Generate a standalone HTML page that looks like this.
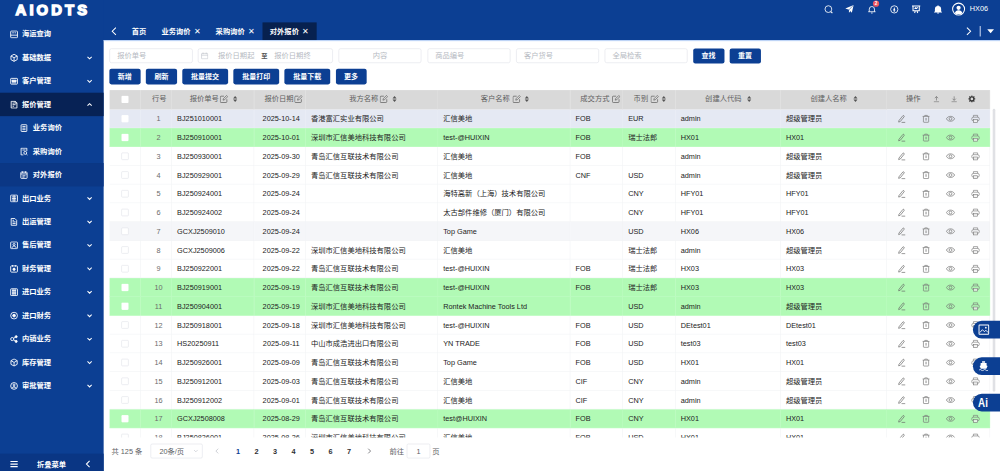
<!DOCTYPE html>
<html lang="zh-CN"><head><meta charset="utf-8"><title>AIODTS - 对外报价</title>
<style>
*{box-sizing:border-box;margin:0;padding:0}
html,body{width:1000px;height:471px;overflow:hidden;background:#fff}
body{font-family:"Liberation Sans","Noto Sans CJK SC",sans-serif;color:#333}
#root{position:absolute;left:0;top:0;width:1920px;height:905px;transform:scale(.5208333);transform-origin:0 0;font-size:14px;overflow:hidden;background:#fff}
svg{display:block}
.abs{position:absolute}
#hdr{position:absolute;left:0;top:0;width:1920px;height:77px;background:#0c3f93}
#side{position:absolute;left:0;top:0;width:199px;height:905px;background:#0c3f93}
#logo{position:absolute;left:30px;top:-.5px;font-size:28.5px;line-height:38px;font-weight:700;color:#fff;letter-spacing:5.9px;-webkit-text-stroke:2.6px #fff;font-family:"Liberation Sans",sans-serif}
#menu{position:absolute;left:0;top:43px;width:199px}
.m{position:relative;height:45px;line-height:45px;color:#fff;font-size:14px;font-weight:700;white-space:nowrap}
.m .mi{position:absolute;left:19px;top:14.5px}
.m .mt{position:absolute;left:42px;top:0}
.m .ar{position:absolute;left:166px;top:16.5px}
.m.sub.cur{background:#0b3785}
.m.sub .mi{left:38px}
.m.sub .mt{left:63px}
.m.act{background:#072255}
#fold{position:absolute;left:0;top:871px;width:199px;height:40px;background:#0a3684;color:#fff;font-weight:700;line-height:40px}
.hi2{position:absolute}
.tab{position:absolute;top:42.5px;height:34.5px;line-height:34px;color:#fff;font-weight:700;font-size:14px;white-space:nowrap;padding-left:14px}
.tab.on{background:#07214f}
.tab .x{position:absolute;top:0;font-weight:400;font-size:15px}
.inp{position:absolute;top:93px;height:28px;border:1px solid #dcdfe6;border-radius:4px;background:#fff;color:#b6bac2;font-size:14px;line-height:26px;padding-left:14px;white-space:nowrap}
.btn{position:absolute;height:29.5px;border-radius:4px;background:#0c3f93;color:#fff;font-size:13.5px;font-weight:700;text-align:center;line-height:29px;white-space:nowrap}
#tw{position:absolute;left:209.5px;top:173px;width:1692px;height:667px;overflow:hidden}
table{border-collapse:separate;border-spacing:0;table-layout:fixed;width:1691px}
th{height:36.5px;background:#d9d9d9;color:#606060;font-weight:400;font-size:14px;border-right:1px solid #e2e2e2;white-space:nowrap;position:relative;padding:0;text-align:center;line-height:36.5px}
th .ht{position:absolute;top:-2.5px}
th .hx{position:absolute;top:8.5px}
th.opsh .oi{position:absolute;top:9.5px}
td{height:36px;border-bottom:1px solid #f0f1f4;border-right:1px solid #f0f1f4;padding:1px 0 0 10.5px;font-size:14px;color:#222;white-space:nowrap;overflow:hidden;line-height:34px}
td.c{text-align:center;padding:1px 0 0 0}
td.n{color:#6b6b6b;padding-left:11px}
tr.g td{background:#b1fab5;border-color:#bcfbc0}
tr.cur td{background:#e5e9f3;border-color:#eaedf5}
tr.hov td{background:#f5f6f9}
.cb{display:inline-block;width:14px;height:14px;border:1px solid #dcdfe6;border-radius:2px;background:#fff;vertical-align:middle;margin-top:-2px;margin-left:2px}
.hcb{border-color:rgba(255,255,255,.45)}
tr.g .cb,tr.cur .cb{border-color:rgba(255,255,255,.45)}
td.ops{position:relative;padding:0}
.op{position:absolute;top:9.2px}
#pg{position:absolute;left:0;top:852px;height:28px;line-height:28px;font-size:14px;color:#606266}
#pg span{position:absolute;top:0;white-space:nowrap}
#pg .pn{font-weight:700;color:#303133;width:30px;text-align:center}
.fl{position:absolute;left:1868px;width:60px;height:33.5px;border-radius:17px 0 0 17px;background:#0c3f93}
</style></head><body>
<div id="root">
<div id="hdr">
<span class="hi2" style="left:1581.5px;top:8.5px"><svg width="18" height="18" viewBox="0 0 18 18" fill="none" stroke="#fff" stroke-width="1.6"><circle cx="8.5" cy="8.5" r="6.5"/><path d="M13.2 13.2l3 3" stroke-width="2"/></svg></span><span class="hi2" style="left:1622px;top:7.5px"><svg width="20" height="20" viewBox="0 0 20 20" fill="none" stroke="#fff" stroke-width="1.6"><path d="M1 8.5L17 1.5l-3.5 15-5-6z" fill="#fff" stroke="none"/><path d="M8 10v6.5l3-3.5z" fill="#fff" stroke="none"/><path d="M8.3 10.7L16.5 2" stroke="#0c3f93" stroke-width="1"/></svg></span><span class="hi2" style="left:1665px;top:8.5px"><svg width="18" height="18" viewBox="0 0 18 18" fill="none" stroke="#fff" stroke-width="1.6"><path d="M4 13.5V8.5a5 5 0 0 1 10 0v5M2 13.5h14M7.5 16h3"/></svg></span><span class="hi2" style="left:1707.5px;top:8.5px"><svg width="18" height="18" viewBox="0 0 18 18" fill="none" stroke="#fff" stroke-width="1.6"><circle cx="9" cy="9" r="7"/><path d="M9 4.5l2.2 6.5H6.8z" fill="#fff" stroke="none"/><path d="M9 9v5" /></svg></span><span class="hi2" style="left:1749.7px;top:8.5px"><svg width="18" height="18" viewBox="0 0 18 18" fill="none" stroke="#fff" stroke-width="1.6"><path d="M1 2.5h16M3 2.5v9h12v-9M6 16l1.5-4.5M12 16l-1.5-4.5M6 8l2-2 2 1.5 2-2.5" stroke-width="2"/></svg></span><span class="hi2" style="left:1792px;top:8.5px"><svg width="18" height="18" viewBox="0 0 18 18" fill="none" stroke="#fff" stroke-width="1.6"><path d="M3 12.5V8.5a6 6 0 0 1 12 0v4l2 2.5H1z" fill="#fff" stroke="none"/><circle cx="9" cy="16" r="1.5" fill="#fff" stroke="none"/><circle cx="9" cy="2.5" r="1.2" fill="#fff" stroke="none"/></svg></span>
<span class="abs" style="left:1676px;top:1px;width:12px;height:12px;border-radius:6px;background:#ee5560;color:#fff;font-size:9px;line-height:12px;text-align:center;font-weight:700">2</span>
<span class="abs" style="left:1828px;top:5px;width:25px;height:25px;border-radius:50%;border:2px solid #fff;overflow:hidden"><svg width="21" height="21" viewBox="0 0 22 22"><circle cx="11" cy="8.5" r="4.2" fill="#fff"/><path d="M3.5 21c0-5 3-7.5 7.5-7.5s7.5 2.5 7.5 7.5z" fill="#fff"/></svg></span>
<span class="abs" style="left:1862px;top:9px;color:#fff;font-size:14px;line-height:17px">HX06</span>
<svg class="abs" style="left:212px;top:50px" width="14" height="20" viewBox="0 0 14 20"><path d="M10.5 3L3.5 10l7 7" fill="none" stroke="#fff" stroke-width="2"/></svg>
<div class="tab" style="left:239px;width:57px">首页</div>
<div class="tab" style="left:296px;width:104px">业务询价<span class="x" style="left:76px">✕</span></div>
<div class="tab" style="left:400px;width:104px">采购询价<span class="x" style="left:76px">✕</span></div>
<div class="tab on" style="left:504px;width:104px">对外报价<span class="x" style="left:76px">✕</span></div>
<svg class="abs" style="left:1853px;top:50px" width="14" height="20" viewBox="0 0 14 20"><path d="M3.5 3l7 7-7 7" fill="none" stroke="#fff" stroke-width="2"/></svg>
<span class="abs" style="left:1881px;top:50px;width:1.5px;height:20px;background:#c9d6f0"></span>
<svg class="abs" style="left:1894px;top:55px" width="16" height="10" viewBox="0 0 16 10"><path d="M1.5 1h13L8 9z" fill="#fff"/></svg>
</div>
<div id="side">
<div id="logo">AIODTS</div>
<div id="menu">
<div class="m"><svg width="16" height="16" viewBox="0 0 16 16" class="mi" fill="none" stroke="#fff" stroke-width="1.7"><rect x="1.5" y="1.5" width="13" height="13" rx="1.5"/><path d="M1.5 9.5h13M4.5 5h3M9 5h2.5"/></svg><span class="mt">海运查询</span></div>
<div class="m"><svg width="16" height="16" viewBox="0 0 16 16" class="mi" fill="none" stroke="#fff" stroke-width="1.7"><path d="M8 1.2l6 3.3v7L8 14.8l-6-3.3v-7z"/><path d="M2 4.5l6 3.3 6-3.3M8 7.8v7"/></svg><span class="mt">基础数据</span><svg class="ar" width="12" height="12" viewBox="0 0 12 12"><path d="M2 4l4 4 4-4" fill="none" stroke="#fff" stroke-width="2"/></svg></div>
<div class="m"><svg width="16" height="16" viewBox="0 0 16 16" class="mi" fill="none" stroke="#fff" stroke-width="1.7"><rect x="1.5" y="2.5" width="13" height="11" rx="1"/><path d="M4 6h8v2.5H4z" fill="#fff"/><path d="M4 11h8"/></svg><span class="mt">客户管理</span><svg class="ar" width="12" height="12" viewBox="0 0 12 12"><path d="M2 4l4 4 4-4" fill="none" stroke="#fff" stroke-width="2"/></svg></div>
<div class="m act"><svg width="16" height="16" viewBox="0 0 16 16" class="mi" fill="none" stroke="#fff" stroke-width="1.7"><path d="M2.5 1.5h8l3 3v10h-11z"/><path d="M5 5h4M5 8h6M5 11h3" /><path d="M10 1.5v3.5h3.5" /></svg><span class="mt">报价管理</span><svg class="ar" width="12" height="12" viewBox="0 0 12 12"><path d="M2 8l4-4 4 4" fill="none" stroke="#fff" stroke-width="2"/></svg></div>
<div class="m sub"><svg width="16" height="16" viewBox="0 0 16 16" class="mi" fill="none" stroke="#fff" stroke-width="1.7"><rect x="2.5" y="1.5" width="11" height="13" rx="1"/><path d="M5 5h6M5 8h6M5 11h6"/></svg><span class="mt">业务询价</span></div>
<div class="m sub"><svg width="16" height="16" viewBox="0 0 16 16" class="mi" fill="none" stroke="#fff" stroke-width="1.7"><path d="M13.5 7V1.5h-11v13H7"/><circle cx="10.5" cy="10.5" r="2.8"/><path d="M12.6 12.6l2.2 2.2M5 5h6"/></svg><span class="mt">采购询价</span></div>
<div class="m sub cur"><svg width="16" height="16" viewBox="0 0 16 16" class="mi" fill="none" stroke="#fff" stroke-width="1.7"><rect x="2" y="2.5" width="12" height="12" rx="1"/><path d="M2 6h12M5 1v3M11 1v3M5 9.5h6M5 12h4"/></svg><span class="mt">对外报价</span></div>
<div class="m"><svg width="16" height="16" viewBox="0 0 16 16" class="mi" fill="none" stroke="#fff" stroke-width="1.7"><rect x="1.5" y="1.5" width="13" height="13" rx="1"/><path d="M4 5h8M4 8h8M4 11h8M8 1.5v13"/></svg><span class="mt">出口业务</span><svg class="ar" width="12" height="12" viewBox="0 0 12 12"><path d="M2 4l4 4 4-4" fill="none" stroke="#fff" stroke-width="2"/></svg></div>
<div class="m"><svg width="16" height="16" viewBox="0 0 16 16" class="mi" fill="none" stroke="#fff" stroke-width="1.7"><path d="M2.5 14.5v-13h7l3.5 3.5v9.5z"/><path d="M5 8h6M5 11h6M5 5h3"/></svg><span class="mt">出运管理</span><svg class="ar" width="12" height="12" viewBox="0 0 12 12"><path d="M2 4l4 4 4-4" fill="none" stroke="#fff" stroke-width="2"/></svg></div>
<div class="m"><svg width="16" height="16" viewBox="0 0 16 16" class="mi" fill="none" stroke="#fff" stroke-width="1.7"><rect x="1.5" y="1.5" width="13" height="13" rx="1.5"/><circle cx="8" cy="6.5" r="2"/><path d="M4 13c.5-2.5 2-3.5 4-3.5s3.5 1 4 3.5"/></svg><span class="mt">售后管理</span><svg class="ar" width="12" height="12" viewBox="0 0 12 12"><path d="M2 4l4 4 4-4" fill="none" stroke="#fff" stroke-width="2"/></svg></div>
<div class="m"><svg width="16" height="16" viewBox="0 0 16 16" class="mi" fill="none" stroke="#fff" stroke-width="1.7"><rect x="1.5" y="2.5" width="13" height="12" rx="1.5"/><path d="M5 1v3M11 1v3"/><circle cx="8" cy="9" r="2.2" fill="#fff"/></svg><span class="mt">财务管理</span><svg class="ar" width="12" height="12" viewBox="0 0 12 12"><path d="M2 4l4 4 4-4" fill="none" stroke="#fff" stroke-width="2"/></svg></div>
<div class="m"><svg width="16" height="16" viewBox="0 0 16 16" class="mi" fill="none" stroke="#fff" stroke-width="1.7"><rect x="1.5" y="1.5" width="13" height="13" rx="1"/><path d="M4 5h8M4 8h8M4 11h8M6 1.5v13M10 1.5v13"/></svg><span class="mt">进口业务</span><svg class="ar" width="12" height="12" viewBox="0 0 12 12"><path d="M2 4l4 4 4-4" fill="none" stroke="#fff" stroke-width="2"/></svg></div>
<div class="m"><svg width="16" height="16" viewBox="0 0 16 16" class="mi" fill="none" stroke="#fff" stroke-width="1.7"><circle cx="8" cy="8" r="6.5"/><circle cx="8" cy="8" r="2.6" fill="#fff"/></svg><span class="mt">进口财务</span><svg class="ar" width="12" height="12" viewBox="0 0 12 12"><path d="M2 4l4 4 4-4" fill="none" stroke="#fff" stroke-width="2"/></svg></div>
<div class="m"><svg width="16" height="16" viewBox="0 0 16 16" class="mi" fill="none" stroke="#fff" stroke-width="1.7"><circle cx="4.5" cy="8" r="3"/><circle cx="12" cy="3.5" r="2" fill="#fff"/><circle cx="12" cy="12.5" r="2" fill="#fff"/><path d="M7 6.5l3.5-2M7 9.5l3.5 2"/></svg><span class="mt">内销业务</span><svg class="ar" width="12" height="12" viewBox="0 0 12 12"><path d="M2 4l4 4 4-4" fill="none" stroke="#fff" stroke-width="2"/></svg></div>
<div class="m"><svg width="16" height="16" viewBox="0 0 16 16" class="mi" fill="none" stroke="#fff" stroke-width="1.7"><path d="M8 1.2l6 3.3v7L8 14.8l-6-3.3v-7z"/><path d="M2 4.5l6 3.3 6-3.3M8 7.8v7"/></svg><span class="mt">库存管理</span><svg class="ar" width="12" height="12" viewBox="0 0 12 12"><path d="M2 4l4 4 4-4" fill="none" stroke="#fff" stroke-width="2"/></svg></div>
<div class="m"><svg width="16" height="16" viewBox="0 0 16 16" class="mi" fill="none" stroke="#fff" stroke-width="1.7"><circle cx="8" cy="8" r="6.5"/><circle cx="8" cy="6" r="1.8"/><path d="M4.5 12.5c.5-2.3 1.8-3.2 3.5-3.2s3 .900 3.5 3.2M8 9.3v3"/></svg><span class="mt">审批管理</span><svg class="ar" width="12" height="12" viewBox="0 0 12 12"><path d="M2 4l4 4 4-4" fill="none" stroke="#fff" stroke-width="2"/></svg></div>
</div>
<div id="fold"><svg class="abs" style="left:19px;top:12px" width="16" height="16" viewBox="0 0 16 16"><path d="M1 3h14M1 8h14M1 13h14" stroke="#fff" stroke-width="2.2"/></svg><span class="abs" style="left:71px;top:0">折叠菜单</span><svg class="abs" style="left:163px;top:11px" width="12" height="18" viewBox="0 0 12 18"><path d="M9 3L3 9l6 6" fill="none" stroke="#fff" stroke-width="2"/></svg></div>
</div>
<div class="abs" style="left:199px;top:77px;width:1721px;height:2px;background:#b9d2f6"></div>

<div class="inp" style="left:210px;width:160px">报价单号</div>
<div class="inp" style="left:379.5px;width:259px;padding-left:0"><svg class="abs" style="left:5px;top:6px" width="14" height="14" viewBox="0 0 14 14"><rect x="1" y="2.5" width="12" height="10.5" rx="1" fill="none" stroke="#c0c4cc" stroke-width="1.2"/><path d="M1 6h12M4 1v3M10 1v3" stroke="#c0c4cc" stroke-width="1.2"/></svg><span class="abs" style="left:38px;top:0">报价日期起</span><span class="abs" style="left:121px;top:0;color:#555;font-weight:700;font-size:12px">至</span><span class="abs" style="left:146px;top:0">报价日期终</span></div>
<div class="inp" style="left:650px;width:159px;padding-left:0;text-align:center">内容</div>
<div class="inp" style="left:820.5px;width:159px">商品编号</div>
<div class="inp" style="left:991px;width:159px">客户货号</div>
<div class="inp" style="left:1161px;width:159px">全局检索</div>
<div class="btn" style="left:1330.5px;top:92.5px;width:60px">查找</div>
<div class="btn" style="left:1400.5px;top:92.5px;width:60px">重置</div>

<div class="btn" style="left:210px;top:132px;width:59.5px">新增</div>
<div class="btn" style="left:280px;top:132px;width:60px">刷新</div>
<div class="btn" style="left:349.5px;top:132px;width:88.5px">批量提交</div>
<div class="btn" style="left:448px;top:132px;width:88px">批量打印</div>
<div class="btn" style="left:546px;top:132px;width:88px">批量下载</div>
<div class="btn" style="left:644.5px;top:132px;width:59px">更多</div>

<div id="tw"><table><colgroup><col style="width:60px"><col style="width:60px"><col style="width:158px"><col style="width:99px"><col style="width:254px"><col style="width:254px"><col style="width:101px"><col style="width:101px"><col style="width:202px"><col style="width:204px"><col style="width:198px"></colgroup><thead><tr><th><span class="cb hcb"></span></th><th><span class="ht" style="left:22.3px">行号</span></th><th><span class="ht" style="left:34.8px">报价单号</span><span class="hx" style="left:92.9px"><svg width="16" height="16" viewBox="0 0 16 16" class="hi"><path d="M13.6 8.5v4.6a1.7 1.7 0 0 1-1.7 1.7H2.6a1.7 1.7 0 0 1-1.7-1.7V4.4a1.7 1.7 0 0 1 1.7-1.7h5.4" fill="none" stroke="#555" stroke-width="1.3"/><path d="M6.2 10.3l.8-3 6-6 2.2 2.2-6 6z" fill="#d9d9d9" stroke="#555" stroke-width="1.2" stroke-linejoin="round"/></svg></span><span class="hx" style="left:117.2px"><svg width="9" height="16" viewBox="0 0 9 16" class="hs"><path d="M4.5 2.2L8.5 7.2H.5z" fill="#555"/><path d="M4.5 13.8L.5 8.8h8z" fill="#555"/></svg></span></th><th><span class="ht" style="left:20.3px">报价日期</span><span class="hx" style="left:77.7px"><svg width="16" height="16" viewBox="0 0 16 16" class="hi"><path d="M13.6 8.5v4.6a1.7 1.7 0 0 1-1.7 1.7H2.6a1.7 1.7 0 0 1-1.7-1.7V4.4a1.7 1.7 0 0 1 1.7-1.7h5.4" fill="none" stroke="#555" stroke-width="1.3"/><path d="M6.2 10.3l.8-3 6-6 2.2 2.2-6 6z" fill="#d9d9d9" stroke="#555" stroke-width="1.2" stroke-linejoin="round"/></svg></span></th><th><span class="ht" style="left:84px">我方名称</span><span class="hx" style="left:142.5px"><svg width="16" height="16" viewBox="0 0 16 16" class="hi"><path d="M13.6 8.5v4.6a1.7 1.7 0 0 1-1.7 1.7H2.6a1.7 1.7 0 0 1-1.7-1.7V4.4a1.7 1.7 0 0 1 1.7-1.7h5.4" fill="none" stroke="#555" stroke-width="1.3"/><path d="M6.2 10.3l.8-3 6-6 2.2 2.2-6 6z" fill="#d9d9d9" stroke="#555" stroke-width="1.2" stroke-linejoin="round"/></svg></span><span class="hx" style="left:166.2px"><svg width="9" height="16" viewBox="0 0 9 16" class="hs"><path d="M4.5 2.2L8.5 7.2H.5z" fill="#555"/><path d="M4.5 13.8L.5 8.8h8z" fill="#555"/></svg></span></th><th><span class="ht" style="left:82.4px">客户名称</span><span class="hx" style="left:143.9px"><svg width="16" height="16" viewBox="0 0 16 16" class="hi"><path d="M13.6 8.5v4.6a1.7 1.7 0 0 1-1.7 1.7H2.6a1.7 1.7 0 0 1-1.7-1.7V4.4a1.7 1.7 0 0 1 1.7-1.7h5.4" fill="none" stroke="#555" stroke-width="1.3"/><path d="M6.2 10.3l.8-3 6-6 2.2 2.2-6 6z" fill="#d9d9d9" stroke="#555" stroke-width="1.2" stroke-linejoin="round"/></svg></span><span class="hx" style="left:166.1px"><svg width="9" height="16" viewBox="0 0 9 16" class="hs"><path d="M4.5 2.2L8.5 7.2H.5z" fill="#555"/><path d="M4.5 13.8L.5 8.8h8z" fill="#555"/></svg></span></th><th><span class="ht" style="left:19.7px">成交方式</span><span class="hx" style="left:80.5px"><svg width="16" height="16" viewBox="0 0 16 16" class="hi"><path d="M13.6 8.5v4.6a1.7 1.7 0 0 1-1.7 1.7H2.6a1.7 1.7 0 0 1-1.7-1.7V4.4a1.7 1.7 0 0 1 1.7-1.7h5.4" fill="none" stroke="#555" stroke-width="1.3"/><path d="M6.2 10.3l.8-3 6-6 2.2 2.2-6 6z" fill="#d9d9d9" stroke="#555" stroke-width="1.2" stroke-linejoin="round"/></svg></span></th><th><span class="ht" style="left:21px">币别</span><span class="hx" style="left:53.5px"><svg width="16" height="16" viewBox="0 0 16 16" class="hi"><path d="M13.6 8.5v4.6a1.7 1.7 0 0 1-1.7 1.7H2.6a1.7 1.7 0 0 1-1.7-1.7V4.4a1.7 1.7 0 0 1 1.7-1.7h5.4" fill="none" stroke="#555" stroke-width="1.3"/><path d="M6.2 10.3l.8-3 6-6 2.2 2.2-6 6z" fill="#d9d9d9" stroke="#555" stroke-width="1.2" stroke-linejoin="round"/></svg></span><span class="hx" style="left:74.9px"><svg width="9" height="16" viewBox="0 0 9 16" class="hs"><path d="M4.5 2.2L8.5 7.2H.5z" fill="#555"/><path d="M4.5 13.8L.5 8.8h8z" fill="#555"/></svg></span></th><th><span class="ht" style="left:57.3px">创建人代码</span><span class="hx" style="left:137.7px"><svg width="9" height="16" viewBox="0 0 9 16" class="hs"><path d="M4.5 2.2L8.5 7.2H.5z" fill="#555"/><path d="M4.5 13.8L.5 8.8h8z" fill="#555"/></svg></span></th><th><span class="ht" style="left:57.5px">创建人名称</span><span class="hx" style="left:139.2px"><svg width="9" height="16" viewBox="0 0 9 16" class="hs"><path d="M4.5 2.2L8.5 7.2H.5z" fill="#555"/><path d="M4.5 13.8L.5 8.8h8z" fill="#555"/></svg></span></th><th class="opsh"><span class="ht" style="left:37px">操作</span><span class="oi" style="left:88.6px"><svg width="14" height="14" viewBox="0 0 14 14" ><path d="M7 10V2.5M3.8 5.5L7 2.3l3.2 3.2M2 12.5h10" fill="none" stroke="#666" stroke-width="1.2"/></svg></span><span class="oi" style="left:122.9px"><svg width="14" height="14" viewBox="0 0 14 14" ><path d="M7 2v7.5M3.8 6.5L7 9.7l3.2-3.2M2 12.5h10" fill="none" stroke="#666" stroke-width="1.2"/></svg></span><span class="oi" style="left:156.7px;top:10px"><svg width="14" height="14" viewBox="0 0 14 14" ><path d="M5.8 0.2L8.2 0.2L8.2 2.2L9.5 2.7L11 1.4L12.6 3L11.3 4.5L11.8 5.8L13.8 5.8L13.8 8.2L11.8 8.2L11.3 9.5L12.6 11L11 12.6L9.5 11.3L8.2 11.8L8.2 13.8L5.8 13.8L5.8 11.8L4.5 11.3L3 12.6L1.4 11L2.7 9.5L2.2 8.2L0.2 8.2L0.2 5.8L2.2 5.8L2.7 4.5L1.4 3L3 1.4L4.5 2.7L5.8 2.2z" fill="#333"/><circle cx="7" cy="7" r="2.6" fill="#d9d9d9"/></svg></span></th></tr></thead><tbody>
<tr class="cur"><td class="c"><span class="cb"></span></td><td class="c n">1</td><td>BJ251010001</td><td class="c" style="padding-left:7px">2025-10-14</td><td>香港富汇实业有限公司</td><td>汇信美地</td><td>FOB</td><td>EUR</td><td>admin</td><td>超级管理员</td><td class="ops"><span class="op" style="left:19px"><svg width="18" height="18" viewBox="0 0 18 18" ><path d="M4 12.5L11.5 3.2a1.6 1.6 0 0 1 2.4 2L6.6 14.3 3.4 15.4z" fill="none" stroke="#666" stroke-width="1.3" stroke-linejoin="round"/><path d="M9 16h7" stroke="#666" stroke-width="1.3"/></svg></span><span class="op" style="left:66px"><svg width="18" height="18" viewBox="0 0 18 18" ><path d="M2.5 4.5h13M6.5 4.5V2.6h5v1.9M4 4.5v10.3a1 1 0 0 0 1 1h8a1 1 0 0 0 1-1V4.5" fill="none" stroke="#777" stroke-width="1.3"/><path d="M9 7.5v5" stroke="#777" stroke-width="1.6"/></svg></span><span class="op" style="left:113px;margin-top:1px"><svg width="18" height="16.2" viewBox="0 0 20 18" ><path d="M1.2 9C3.2 5.4 6.4 3.8 10 3.8s6.8 1.6 8.8 5.2C16.8 12.6 13.6 14.2 10 14.2S3.2 12.6 1.2 9z" fill="none" stroke="#6c6c6c" stroke-width="1.4"/><circle cx="10" cy="9" r="3" fill="none" stroke="#6c6c6c" stroke-width="1.4"/></svg></span><span class="op" style="left:161px"><svg width="18" height="18" viewBox="0 0 18 18" ><path d="M5 6V2.5h8V6" fill="none" stroke="#777" stroke-width="1.2"/><rect x="1.8" y="6" width="14.4" height="7" rx="3" fill="none" stroke="#777" stroke-width="1.2"/><rect x="5" y="10.5" width="8" height="5.5" fill="#fff" fill-opacity=".7" stroke="#777" stroke-width="1.2"/></svg></span></td></tr>
<tr class="g"><td class="c"><span class="cb"></span></td><td class="c n">2</td><td>BJ250910001</td><td class="c" style="padding-left:7px">2025-10-01</td><td>深圳市汇信美地科技有限公司</td><td>test-@HUIXIN</td><td>FOB</td><td>瑞士法郎</td><td>HX01</td><td>HX01</td><td class="ops"><span class="op" style="left:19px"><svg width="18" height="18" viewBox="0 0 18 18" ><path d="M4 12.5L11.5 3.2a1.6 1.6 0 0 1 2.4 2L6.6 14.3 3.4 15.4z" fill="none" stroke="#666" stroke-width="1.3" stroke-linejoin="round"/><path d="M9 16h7" stroke="#666" stroke-width="1.3"/></svg></span><span class="op" style="left:66px"><svg width="18" height="18" viewBox="0 0 18 18" ><path d="M2.5 4.5h13M6.5 4.5V2.6h5v1.9M4 4.5v10.3a1 1 0 0 0 1 1h8a1 1 0 0 0 1-1V4.5" fill="none" stroke="#777" stroke-width="1.3"/><path d="M9 7.5v5" stroke="#777" stroke-width="1.6"/></svg></span><span class="op" style="left:113px;margin-top:1px"><svg width="18" height="16.2" viewBox="0 0 20 18" ><path d="M1.2 9C3.2 5.4 6.4 3.8 10 3.8s6.8 1.6 8.8 5.2C16.8 12.6 13.6 14.2 10 14.2S3.2 12.6 1.2 9z" fill="none" stroke="#6c6c6c" stroke-width="1.4"/><circle cx="10" cy="9" r="3" fill="none" stroke="#6c6c6c" stroke-width="1.4"/></svg></span><span class="op" style="left:161px"><svg width="18" height="18" viewBox="0 0 18 18" ><path d="M5 6V2.5h8V6" fill="none" stroke="#777" stroke-width="1.2"/><rect x="1.8" y="6" width="14.4" height="7" rx="3" fill="none" stroke="#777" stroke-width="1.2"/><rect x="5" y="10.5" width="8" height="5.5" fill="#fff" fill-opacity=".7" stroke="#777" stroke-width="1.2"/></svg></span></td></tr>
<tr class=""><td class="c"><span class="cb"></span></td><td class="c n">3</td><td>BJ250930001</td><td class="c" style="padding-left:7px">2025-09-30</td><td>青岛汇信互联技术有限公司</td><td>汇信美地</td><td>FOB</td><td></td><td>admin</td><td>超级管理员</td><td class="ops"><span class="op" style="left:19px"><svg width="18" height="18" viewBox="0 0 18 18" ><path d="M4 12.5L11.5 3.2a1.6 1.6 0 0 1 2.4 2L6.6 14.3 3.4 15.4z" fill="none" stroke="#666" stroke-width="1.3" stroke-linejoin="round"/><path d="M9 16h7" stroke="#666" stroke-width="1.3"/></svg></span><span class="op" style="left:66px"><svg width="18" height="18" viewBox="0 0 18 18" ><path d="M2.5 4.5h13M6.5 4.5V2.6h5v1.9M4 4.5v10.3a1 1 0 0 0 1 1h8a1 1 0 0 0 1-1V4.5" fill="none" stroke="#777" stroke-width="1.3"/><path d="M9 7.5v5" stroke="#777" stroke-width="1.6"/></svg></span><span class="op" style="left:113px;margin-top:1px"><svg width="18" height="16.2" viewBox="0 0 20 18" ><path d="M1.2 9C3.2 5.4 6.4 3.8 10 3.8s6.8 1.6 8.8 5.2C16.8 12.6 13.6 14.2 10 14.2S3.2 12.6 1.2 9z" fill="none" stroke="#6c6c6c" stroke-width="1.4"/><circle cx="10" cy="9" r="3" fill="none" stroke="#6c6c6c" stroke-width="1.4"/></svg></span><span class="op" style="left:161px"><svg width="18" height="18" viewBox="0 0 18 18" ><path d="M5 6V2.5h8V6" fill="none" stroke="#777" stroke-width="1.2"/><rect x="1.8" y="6" width="14.4" height="7" rx="3" fill="none" stroke="#777" stroke-width="1.2"/><rect x="5" y="10.5" width="8" height="5.5" fill="#fff" fill-opacity=".7" stroke="#777" stroke-width="1.2"/></svg></span></td></tr>
<tr class=""><td class="c"><span class="cb"></span></td><td class="c n">4</td><td>BJ250929001</td><td class="c" style="padding-left:7px">2025-09-29</td><td>青岛汇信互联技术有限公司</td><td>汇信美地</td><td>CNF</td><td>USD</td><td>admin</td><td>超级管理员</td><td class="ops"><span class="op" style="left:19px"><svg width="18" height="18" viewBox="0 0 18 18" ><path d="M4 12.5L11.5 3.2a1.6 1.6 0 0 1 2.4 2L6.6 14.3 3.4 15.4z" fill="none" stroke="#666" stroke-width="1.3" stroke-linejoin="round"/><path d="M9 16h7" stroke="#666" stroke-width="1.3"/></svg></span><span class="op" style="left:66px"><svg width="18" height="18" viewBox="0 0 18 18" ><path d="M2.5 4.5h13M6.5 4.5V2.6h5v1.9M4 4.5v10.3a1 1 0 0 0 1 1h8a1 1 0 0 0 1-1V4.5" fill="none" stroke="#777" stroke-width="1.3"/><path d="M9 7.5v5" stroke="#777" stroke-width="1.6"/></svg></span><span class="op" style="left:113px;margin-top:1px"><svg width="18" height="16.2" viewBox="0 0 20 18" ><path d="M1.2 9C3.2 5.4 6.4 3.8 10 3.8s6.8 1.6 8.8 5.2C16.8 12.6 13.6 14.2 10 14.2S3.2 12.6 1.2 9z" fill="none" stroke="#6c6c6c" stroke-width="1.4"/><circle cx="10" cy="9" r="3" fill="none" stroke="#6c6c6c" stroke-width="1.4"/></svg></span><span class="op" style="left:161px"><svg width="18" height="18" viewBox="0 0 18 18" ><path d="M5 6V2.5h8V6" fill="none" stroke="#777" stroke-width="1.2"/><rect x="1.8" y="6" width="14.4" height="7" rx="3" fill="none" stroke="#777" stroke-width="1.2"/><rect x="5" y="10.5" width="8" height="5.5" fill="#fff" fill-opacity=".7" stroke="#777" stroke-width="1.2"/></svg></span></td></tr>
<tr class=""><td class="c"><span class="cb"></span></td><td class="c n">5</td><td>BJ250924001</td><td class="c" style="padding-left:7px">2025-09-24</td><td></td><td>海特高新（上海）技术有限公司</td><td></td><td>CNY</td><td>HFY01</td><td>HFY01</td><td class="ops"><span class="op" style="left:19px"><svg width="18" height="18" viewBox="0 0 18 18" ><path d="M4 12.5L11.5 3.2a1.6 1.6 0 0 1 2.4 2L6.6 14.3 3.4 15.4z" fill="none" stroke="#666" stroke-width="1.3" stroke-linejoin="round"/><path d="M9 16h7" stroke="#666" stroke-width="1.3"/></svg></span><span class="op" style="left:66px"><svg width="18" height="18" viewBox="0 0 18 18" ><path d="M2.5 4.5h13M6.5 4.5V2.6h5v1.9M4 4.5v10.3a1 1 0 0 0 1 1h8a1 1 0 0 0 1-1V4.5" fill="none" stroke="#777" stroke-width="1.3"/><path d="M9 7.5v5" stroke="#777" stroke-width="1.6"/></svg></span><span class="op" style="left:113px;margin-top:1px"><svg width="18" height="16.2" viewBox="0 0 20 18" ><path d="M1.2 9C3.2 5.4 6.4 3.8 10 3.8s6.8 1.6 8.8 5.2C16.8 12.6 13.6 14.2 10 14.2S3.2 12.6 1.2 9z" fill="none" stroke="#6c6c6c" stroke-width="1.4"/><circle cx="10" cy="9" r="3" fill="none" stroke="#6c6c6c" stroke-width="1.4"/></svg></span><span class="op" style="left:161px"><svg width="18" height="18" viewBox="0 0 18 18" ><path d="M5 6V2.5h8V6" fill="none" stroke="#777" stroke-width="1.2"/><rect x="1.8" y="6" width="14.4" height="7" rx="3" fill="none" stroke="#777" stroke-width="1.2"/><rect x="5" y="10.5" width="8" height="5.5" fill="#fff" fill-opacity=".7" stroke="#777" stroke-width="1.2"/></svg></span></td></tr>
<tr class=""><td class="c"><span class="cb"></span></td><td class="c n">6</td><td>BJ250924002</td><td class="c" style="padding-left:7px">2025-09-24</td><td></td><td>太古部件维修（厦门）有限公司</td><td></td><td>CNY</td><td>HFY01</td><td>HFY01</td><td class="ops"><span class="op" style="left:19px"><svg width="18" height="18" viewBox="0 0 18 18" ><path d="M4 12.5L11.5 3.2a1.6 1.6 0 0 1 2.4 2L6.6 14.3 3.4 15.4z" fill="none" stroke="#666" stroke-width="1.3" stroke-linejoin="round"/><path d="M9 16h7" stroke="#666" stroke-width="1.3"/></svg></span><span class="op" style="left:66px"><svg width="18" height="18" viewBox="0 0 18 18" ><path d="M2.5 4.5h13M6.5 4.5V2.6h5v1.9M4 4.5v10.3a1 1 0 0 0 1 1h8a1 1 0 0 0 1-1V4.5" fill="none" stroke="#777" stroke-width="1.3"/><path d="M9 7.5v5" stroke="#777" stroke-width="1.6"/></svg></span><span class="op" style="left:113px;margin-top:1px"><svg width="18" height="16.2" viewBox="0 0 20 18" ><path d="M1.2 9C3.2 5.4 6.4 3.8 10 3.8s6.8 1.6 8.8 5.2C16.8 12.6 13.6 14.2 10 14.2S3.2 12.6 1.2 9z" fill="none" stroke="#6c6c6c" stroke-width="1.4"/><circle cx="10" cy="9" r="3" fill="none" stroke="#6c6c6c" stroke-width="1.4"/></svg></span><span class="op" style="left:161px"><svg width="18" height="18" viewBox="0 0 18 18" ><path d="M5 6V2.5h8V6" fill="none" stroke="#777" stroke-width="1.2"/><rect x="1.8" y="6" width="14.4" height="7" rx="3" fill="none" stroke="#777" stroke-width="1.2"/><rect x="5" y="10.5" width="8" height="5.5" fill="#fff" fill-opacity=".7" stroke="#777" stroke-width="1.2"/></svg></span></td></tr>
<tr class="hov"><td class="c"><span class="cb"></span></td><td class="c n">7</td><td>GCXJ2509010</td><td class="c" style="padding-left:7px">2025-09-24</td><td></td><td>Top Game</td><td></td><td>USD</td><td>HX06</td><td>HX06</td><td class="ops"><span class="op" style="left:19px"><svg width="18" height="18" viewBox="0 0 18 18" ><path d="M4 12.5L11.5 3.2a1.6 1.6 0 0 1 2.4 2L6.6 14.3 3.4 15.4z" fill="none" stroke="#666" stroke-width="1.3" stroke-linejoin="round"/><path d="M9 16h7" stroke="#666" stroke-width="1.3"/></svg></span><span class="op" style="left:66px"><svg width="18" height="18" viewBox="0 0 18 18" ><path d="M2.5 4.5h13M6.5 4.5V2.6h5v1.9M4 4.5v10.3a1 1 0 0 0 1 1h8a1 1 0 0 0 1-1V4.5" fill="none" stroke="#777" stroke-width="1.3"/><path d="M9 7.5v5" stroke="#777" stroke-width="1.6"/></svg></span><span class="op" style="left:113px;margin-top:1px"><svg width="18" height="16.2" viewBox="0 0 20 18" ><path d="M1.2 9C3.2 5.4 6.4 3.8 10 3.8s6.8 1.6 8.8 5.2C16.8 12.6 13.6 14.2 10 14.2S3.2 12.6 1.2 9z" fill="none" stroke="#6c6c6c" stroke-width="1.4"/><circle cx="10" cy="9" r="3" fill="none" stroke="#6c6c6c" stroke-width="1.4"/></svg></span><span class="op" style="left:161px"><svg width="18" height="18" viewBox="0 0 18 18" ><path d="M5 6V2.5h8V6" fill="none" stroke="#777" stroke-width="1.2"/><rect x="1.8" y="6" width="14.4" height="7" rx="3" fill="none" stroke="#777" stroke-width="1.2"/><rect x="5" y="10.5" width="8" height="5.5" fill="#fff" fill-opacity=".7" stroke="#777" stroke-width="1.2"/></svg></span></td></tr>
<tr class=""><td class="c"><span class="cb"></span></td><td class="c n">8</td><td>GCXJ2509006</td><td class="c" style="padding-left:7px">2025-09-22</td><td>深圳市汇信美地科技有限公司</td><td>汇信美地</td><td></td><td>瑞士法郎</td><td>admin</td><td>超级管理员</td><td class="ops"><span class="op" style="left:19px"><svg width="18" height="18" viewBox="0 0 18 18" ><path d="M4 12.5L11.5 3.2a1.6 1.6 0 0 1 2.4 2L6.6 14.3 3.4 15.4z" fill="none" stroke="#666" stroke-width="1.3" stroke-linejoin="round"/><path d="M9 16h7" stroke="#666" stroke-width="1.3"/></svg></span><span class="op" style="left:66px"><svg width="18" height="18" viewBox="0 0 18 18" ><path d="M2.5 4.5h13M6.5 4.5V2.6h5v1.9M4 4.5v10.3a1 1 0 0 0 1 1h8a1 1 0 0 0 1-1V4.5" fill="none" stroke="#777" stroke-width="1.3"/><path d="M9 7.5v5" stroke="#777" stroke-width="1.6"/></svg></span><span class="op" style="left:113px;margin-top:1px"><svg width="18" height="16.2" viewBox="0 0 20 18" ><path d="M1.2 9C3.2 5.4 6.4 3.8 10 3.8s6.8 1.6 8.8 5.2C16.8 12.6 13.6 14.2 10 14.2S3.2 12.6 1.2 9z" fill="none" stroke="#6c6c6c" stroke-width="1.4"/><circle cx="10" cy="9" r="3" fill="none" stroke="#6c6c6c" stroke-width="1.4"/></svg></span><span class="op" style="left:161px"><svg width="18" height="18" viewBox="0 0 18 18" ><path d="M5 6V2.5h8V6" fill="none" stroke="#777" stroke-width="1.2"/><rect x="1.8" y="6" width="14.4" height="7" rx="3" fill="none" stroke="#777" stroke-width="1.2"/><rect x="5" y="10.5" width="8" height="5.5" fill="#fff" fill-opacity=".7" stroke="#777" stroke-width="1.2"/></svg></span></td></tr>
<tr class=""><td class="c"><span class="cb"></span></td><td class="c n">9</td><td>BJ250922001</td><td class="c" style="padding-left:7px">2025-09-22</td><td>青岛汇信互联技术有限公司</td><td>test-@HUIXIN</td><td>FOB</td><td>瑞士法郎</td><td>HX03</td><td>HX03</td><td class="ops"><span class="op" style="left:19px"><svg width="18" height="18" viewBox="0 0 18 18" ><path d="M4 12.5L11.5 3.2a1.6 1.6 0 0 1 2.4 2L6.6 14.3 3.4 15.4z" fill="none" stroke="#666" stroke-width="1.3" stroke-linejoin="round"/><path d="M9 16h7" stroke="#666" stroke-width="1.3"/></svg></span><span class="op" style="left:66px"><svg width="18" height="18" viewBox="0 0 18 18" ><path d="M2.5 4.5h13M6.5 4.5V2.6h5v1.9M4 4.5v10.3a1 1 0 0 0 1 1h8a1 1 0 0 0 1-1V4.5" fill="none" stroke="#777" stroke-width="1.3"/><path d="M9 7.5v5" stroke="#777" stroke-width="1.6"/></svg></span><span class="op" style="left:113px;margin-top:1px"><svg width="18" height="16.2" viewBox="0 0 20 18" ><path d="M1.2 9C3.2 5.4 6.4 3.8 10 3.8s6.8 1.6 8.8 5.2C16.8 12.6 13.6 14.2 10 14.2S3.2 12.6 1.2 9z" fill="none" stroke="#6c6c6c" stroke-width="1.4"/><circle cx="10" cy="9" r="3" fill="none" stroke="#6c6c6c" stroke-width="1.4"/></svg></span><span class="op" style="left:161px"><svg width="18" height="18" viewBox="0 0 18 18" ><path d="M5 6V2.5h8V6" fill="none" stroke="#777" stroke-width="1.2"/><rect x="1.8" y="6" width="14.4" height="7" rx="3" fill="none" stroke="#777" stroke-width="1.2"/><rect x="5" y="10.5" width="8" height="5.5" fill="#fff" fill-opacity=".7" stroke="#777" stroke-width="1.2"/></svg></span></td></tr>
<tr class="g"><td class="c"><span class="cb"></span></td><td class="c n">10</td><td>BJ250919001</td><td class="c" style="padding-left:7px">2025-09-19</td><td>青岛汇信互联技术有限公司</td><td>test-@HUIXIN</td><td>FOB</td><td>瑞士法郎</td><td>HX03</td><td>HX03</td><td class="ops"><span class="op" style="left:19px"><svg width="18" height="18" viewBox="0 0 18 18" ><path d="M4 12.5L11.5 3.2a1.6 1.6 0 0 1 2.4 2L6.6 14.3 3.4 15.4z" fill="none" stroke="#666" stroke-width="1.3" stroke-linejoin="round"/><path d="M9 16h7" stroke="#666" stroke-width="1.3"/></svg></span><span class="op" style="left:66px"><svg width="18" height="18" viewBox="0 0 18 18" ><path d="M2.5 4.5h13M6.5 4.5V2.6h5v1.9M4 4.5v10.3a1 1 0 0 0 1 1h8a1 1 0 0 0 1-1V4.5" fill="none" stroke="#777" stroke-width="1.3"/><path d="M9 7.5v5" stroke="#777" stroke-width="1.6"/></svg></span><span class="op" style="left:113px;margin-top:1px"><svg width="18" height="16.2" viewBox="0 0 20 18" ><path d="M1.2 9C3.2 5.4 6.4 3.8 10 3.8s6.8 1.6 8.8 5.2C16.8 12.6 13.6 14.2 10 14.2S3.2 12.6 1.2 9z" fill="none" stroke="#6c6c6c" stroke-width="1.4"/><circle cx="10" cy="9" r="3" fill="none" stroke="#6c6c6c" stroke-width="1.4"/></svg></span><span class="op" style="left:161px"><svg width="18" height="18" viewBox="0 0 18 18" ><path d="M5 6V2.5h8V6" fill="none" stroke="#777" stroke-width="1.2"/><rect x="1.8" y="6" width="14.4" height="7" rx="3" fill="none" stroke="#777" stroke-width="1.2"/><rect x="5" y="10.5" width="8" height="5.5" fill="#fff" fill-opacity=".7" stroke="#777" stroke-width="1.2"/></svg></span></td></tr>
<tr class="g"><td class="c"><span class="cb"></span></td><td class="c n">11</td><td>BJ250904001</td><td class="c" style="padding-left:7px">2025-09-19</td><td>深圳市汇信美地科技有限公司</td><td>Rontek Machine Tools Ltd</td><td></td><td>USD</td><td>admin</td><td>超级管理员</td><td class="ops"><span class="op" style="left:19px"><svg width="18" height="18" viewBox="0 0 18 18" ><path d="M4 12.5L11.5 3.2a1.6 1.6 0 0 1 2.4 2L6.6 14.3 3.4 15.4z" fill="none" stroke="#666" stroke-width="1.3" stroke-linejoin="round"/><path d="M9 16h7" stroke="#666" stroke-width="1.3"/></svg></span><span class="op" style="left:66px"><svg width="18" height="18" viewBox="0 0 18 18" ><path d="M2.5 4.5h13M6.5 4.5V2.6h5v1.9M4 4.5v10.3a1 1 0 0 0 1 1h8a1 1 0 0 0 1-1V4.5" fill="none" stroke="#777" stroke-width="1.3"/><path d="M9 7.5v5" stroke="#777" stroke-width="1.6"/></svg></span><span class="op" style="left:113px;margin-top:1px"><svg width="18" height="16.2" viewBox="0 0 20 18" ><path d="M1.2 9C3.2 5.4 6.4 3.8 10 3.8s6.8 1.6 8.8 5.2C16.8 12.6 13.6 14.2 10 14.2S3.2 12.6 1.2 9z" fill="none" stroke="#6c6c6c" stroke-width="1.4"/><circle cx="10" cy="9" r="3" fill="none" stroke="#6c6c6c" stroke-width="1.4"/></svg></span><span class="op" style="left:161px"><svg width="18" height="18" viewBox="0 0 18 18" ><path d="M5 6V2.5h8V6" fill="none" stroke="#777" stroke-width="1.2"/><rect x="1.8" y="6" width="14.4" height="7" rx="3" fill="none" stroke="#777" stroke-width="1.2"/><rect x="5" y="10.5" width="8" height="5.5" fill="#fff" fill-opacity=".7" stroke="#777" stroke-width="1.2"/></svg></span></td></tr>
<tr class=""><td class="c"><span class="cb"></span></td><td class="c n">12</td><td>BJ250918001</td><td class="c" style="padding-left:7px">2025-09-18</td><td>深圳市汇信美地科技有限公司</td><td>test-@HUIXIN</td><td>FOB</td><td>USD</td><td>DEtest01</td><td>DEtest01</td><td class="ops"><span class="op" style="left:19px"><svg width="18" height="18" viewBox="0 0 18 18" ><path d="M4 12.5L11.5 3.2a1.6 1.6 0 0 1 2.4 2L6.6 14.3 3.4 15.4z" fill="none" stroke="#666" stroke-width="1.3" stroke-linejoin="round"/><path d="M9 16h7" stroke="#666" stroke-width="1.3"/></svg></span><span class="op" style="left:66px"><svg width="18" height="18" viewBox="0 0 18 18" ><path d="M2.5 4.5h13M6.5 4.5V2.6h5v1.9M4 4.5v10.3a1 1 0 0 0 1 1h8a1 1 0 0 0 1-1V4.5" fill="none" stroke="#777" stroke-width="1.3"/><path d="M9 7.5v5" stroke="#777" stroke-width="1.6"/></svg></span><span class="op" style="left:113px;margin-top:1px"><svg width="18" height="16.2" viewBox="0 0 20 18" ><path d="M1.2 9C3.2 5.4 6.4 3.8 10 3.8s6.8 1.6 8.8 5.2C16.8 12.6 13.6 14.2 10 14.2S3.2 12.6 1.2 9z" fill="none" stroke="#6c6c6c" stroke-width="1.4"/><circle cx="10" cy="9" r="3" fill="none" stroke="#6c6c6c" stroke-width="1.4"/></svg></span><span class="op" style="left:161px"><svg width="18" height="18" viewBox="0 0 18 18" ><path d="M5 6V2.5h8V6" fill="none" stroke="#777" stroke-width="1.2"/><rect x="1.8" y="6" width="14.4" height="7" rx="3" fill="none" stroke="#777" stroke-width="1.2"/><rect x="5" y="10.5" width="8" height="5.5" fill="#fff" fill-opacity=".7" stroke="#777" stroke-width="1.2"/></svg></span></td></tr>
<tr class=""><td class="c"><span class="cb"></span></td><td class="c n">13</td><td>HS20250911</td><td class="c" style="padding-left:7px">2025-09-11</td><td>中山市成浩进出口有限公司</td><td>YN TRADE</td><td>FOB</td><td>USD</td><td>test03</td><td>test03</td><td class="ops"><span class="op" style="left:19px"><svg width="18" height="18" viewBox="0 0 18 18" ><path d="M4 12.5L11.5 3.2a1.6 1.6 0 0 1 2.4 2L6.6 14.3 3.4 15.4z" fill="none" stroke="#666" stroke-width="1.3" stroke-linejoin="round"/><path d="M9 16h7" stroke="#666" stroke-width="1.3"/></svg></span><span class="op" style="left:66px"><svg width="18" height="18" viewBox="0 0 18 18" ><path d="M2.5 4.5h13M6.5 4.5V2.6h5v1.9M4 4.5v10.3a1 1 0 0 0 1 1h8a1 1 0 0 0 1-1V4.5" fill="none" stroke="#777" stroke-width="1.3"/><path d="M9 7.5v5" stroke="#777" stroke-width="1.6"/></svg></span><span class="op" style="left:113px;margin-top:1px"><svg width="18" height="16.2" viewBox="0 0 20 18" ><path d="M1.2 9C3.2 5.4 6.4 3.8 10 3.8s6.8 1.6 8.8 5.2C16.8 12.6 13.6 14.2 10 14.2S3.2 12.6 1.2 9z" fill="none" stroke="#6c6c6c" stroke-width="1.4"/><circle cx="10" cy="9" r="3" fill="none" stroke="#6c6c6c" stroke-width="1.4"/></svg></span><span class="op" style="left:161px"><svg width="18" height="18" viewBox="0 0 18 18" ><path d="M5 6V2.5h8V6" fill="none" stroke="#777" stroke-width="1.2"/><rect x="1.8" y="6" width="14.4" height="7" rx="3" fill="none" stroke="#777" stroke-width="1.2"/><rect x="5" y="10.5" width="8" height="5.5" fill="#fff" fill-opacity=".7" stroke="#777" stroke-width="1.2"/></svg></span></td></tr>
<tr class=""><td class="c"><span class="cb"></span></td><td class="c n">14</td><td>BJ250926001</td><td class="c" style="padding-left:7px">2025-09-09</td><td>青岛汇信互联技术有限公司</td><td>Top Game</td><td>FOB</td><td>USD</td><td>HX01</td><td>HX01</td><td class="ops"><span class="op" style="left:19px"><svg width="18" height="18" viewBox="0 0 18 18" ><path d="M4 12.5L11.5 3.2a1.6 1.6 0 0 1 2.4 2L6.6 14.3 3.4 15.4z" fill="none" stroke="#666" stroke-width="1.3" stroke-linejoin="round"/><path d="M9 16h7" stroke="#666" stroke-width="1.3"/></svg></span><span class="op" style="left:66px"><svg width="18" height="18" viewBox="0 0 18 18" ><path d="M2.5 4.5h13M6.5 4.5V2.6h5v1.9M4 4.5v10.3a1 1 0 0 0 1 1h8a1 1 0 0 0 1-1V4.5" fill="none" stroke="#777" stroke-width="1.3"/><path d="M9 7.5v5" stroke="#777" stroke-width="1.6"/></svg></span><span class="op" style="left:113px;margin-top:1px"><svg width="18" height="16.2" viewBox="0 0 20 18" ><path d="M1.2 9C3.2 5.4 6.4 3.8 10 3.8s6.8 1.6 8.8 5.2C16.8 12.6 13.6 14.2 10 14.2S3.2 12.6 1.2 9z" fill="none" stroke="#6c6c6c" stroke-width="1.4"/><circle cx="10" cy="9" r="3" fill="none" stroke="#6c6c6c" stroke-width="1.4"/></svg></span><span class="op" style="left:161px"><svg width="18" height="18" viewBox="0 0 18 18" ><path d="M5 6V2.5h8V6" fill="none" stroke="#777" stroke-width="1.2"/><rect x="1.8" y="6" width="14.4" height="7" rx="3" fill="none" stroke="#777" stroke-width="1.2"/><rect x="5" y="10.5" width="8" height="5.5" fill="#fff" fill-opacity=".7" stroke="#777" stroke-width="1.2"/></svg></span></td></tr>
<tr class=""><td class="c"><span class="cb"></span></td><td class="c n">15</td><td>BJ250912001</td><td class="c" style="padding-left:7px">2025-09-03</td><td>青岛汇信互联技术有限公司</td><td>汇信美地</td><td>CIF</td><td>CNY</td><td>admin</td><td>超级管理员</td><td class="ops"><span class="op" style="left:19px"><svg width="18" height="18" viewBox="0 0 18 18" ><path d="M4 12.5L11.5 3.2a1.6 1.6 0 0 1 2.4 2L6.6 14.3 3.4 15.4z" fill="none" stroke="#666" stroke-width="1.3" stroke-linejoin="round"/><path d="M9 16h7" stroke="#666" stroke-width="1.3"/></svg></span><span class="op" style="left:66px"><svg width="18" height="18" viewBox="0 0 18 18" ><path d="M2.5 4.5h13M6.5 4.5V2.6h5v1.9M4 4.5v10.3a1 1 0 0 0 1 1h8a1 1 0 0 0 1-1V4.5" fill="none" stroke="#777" stroke-width="1.3"/><path d="M9 7.5v5" stroke="#777" stroke-width="1.6"/></svg></span><span class="op" style="left:113px;margin-top:1px"><svg width="18" height="16.2" viewBox="0 0 20 18" ><path d="M1.2 9C3.2 5.4 6.4 3.8 10 3.8s6.8 1.6 8.8 5.2C16.8 12.6 13.6 14.2 10 14.2S3.2 12.6 1.2 9z" fill="none" stroke="#6c6c6c" stroke-width="1.4"/><circle cx="10" cy="9" r="3" fill="none" stroke="#6c6c6c" stroke-width="1.4"/></svg></span><span class="op" style="left:161px"><svg width="18" height="18" viewBox="0 0 18 18" ><path d="M5 6V2.5h8V6" fill="none" stroke="#777" stroke-width="1.2"/><rect x="1.8" y="6" width="14.4" height="7" rx="3" fill="none" stroke="#777" stroke-width="1.2"/><rect x="5" y="10.5" width="8" height="5.5" fill="#fff" fill-opacity=".7" stroke="#777" stroke-width="1.2"/></svg></span></td></tr>
<tr class=""><td class="c"><span class="cb"></span></td><td class="c n">16</td><td>BJ250912002</td><td class="c" style="padding-left:7px">2025-09-01</td><td>青岛汇信互联技术有限公司</td><td>汇信美地</td><td>CIF</td><td>CNY</td><td>admin</td><td>超级管理员</td><td class="ops"><span class="op" style="left:19px"><svg width="18" height="18" viewBox="0 0 18 18" ><path d="M4 12.5L11.5 3.2a1.6 1.6 0 0 1 2.4 2L6.6 14.3 3.4 15.4z" fill="none" stroke="#666" stroke-width="1.3" stroke-linejoin="round"/><path d="M9 16h7" stroke="#666" stroke-width="1.3"/></svg></span><span class="op" style="left:66px"><svg width="18" height="18" viewBox="0 0 18 18" ><path d="M2.5 4.5h13M6.5 4.5V2.6h5v1.9M4 4.5v10.3a1 1 0 0 0 1 1h8a1 1 0 0 0 1-1V4.5" fill="none" stroke="#777" stroke-width="1.3"/><path d="M9 7.5v5" stroke="#777" stroke-width="1.6"/></svg></span><span class="op" style="left:113px;margin-top:1px"><svg width="18" height="16.2" viewBox="0 0 20 18" ><path d="M1.2 9C3.2 5.4 6.4 3.8 10 3.8s6.8 1.6 8.8 5.2C16.8 12.6 13.6 14.2 10 14.2S3.2 12.6 1.2 9z" fill="none" stroke="#6c6c6c" stroke-width="1.4"/><circle cx="10" cy="9" r="3" fill="none" stroke="#6c6c6c" stroke-width="1.4"/></svg></span><span class="op" style="left:161px"><svg width="18" height="18" viewBox="0 0 18 18" ><path d="M5 6V2.5h8V6" fill="none" stroke="#777" stroke-width="1.2"/><rect x="1.8" y="6" width="14.4" height="7" rx="3" fill="none" stroke="#777" stroke-width="1.2"/><rect x="5" y="10.5" width="8" height="5.5" fill="#fff" fill-opacity=".7" stroke="#777" stroke-width="1.2"/></svg></span></td></tr>
<tr class="g"><td class="c"><span class="cb"></span></td><td class="c n">17</td><td>GCXJ2508008</td><td class="c" style="padding-left:7px">2025-08-29</td><td>青岛汇信互联技术有限公司</td><td>test@HUIXIN</td><td>FOB</td><td>CNY</td><td>HX01</td><td>HX01</td><td class="ops"><span class="op" style="left:19px"><svg width="18" height="18" viewBox="0 0 18 18" ><path d="M4 12.5L11.5 3.2a1.6 1.6 0 0 1 2.4 2L6.6 14.3 3.4 15.4z" fill="none" stroke="#666" stroke-width="1.3" stroke-linejoin="round"/><path d="M9 16h7" stroke="#666" stroke-width="1.3"/></svg></span><span class="op" style="left:66px"><svg width="18" height="18" viewBox="0 0 18 18" ><path d="M2.5 4.5h13M6.5 4.5V2.6h5v1.9M4 4.5v10.3a1 1 0 0 0 1 1h8a1 1 0 0 0 1-1V4.5" fill="none" stroke="#777" stroke-width="1.3"/><path d="M9 7.5v5" stroke="#777" stroke-width="1.6"/></svg></span><span class="op" style="left:113px;margin-top:1px"><svg width="18" height="16.2" viewBox="0 0 20 18" ><path d="M1.2 9C3.2 5.4 6.4 3.8 10 3.8s6.8 1.6 8.8 5.2C16.8 12.6 13.6 14.2 10 14.2S3.2 12.6 1.2 9z" fill="none" stroke="#6c6c6c" stroke-width="1.4"/><circle cx="10" cy="9" r="3" fill="none" stroke="#6c6c6c" stroke-width="1.4"/></svg></span><span class="op" style="left:161px"><svg width="18" height="18" viewBox="0 0 18 18" ><path d="M5 6V2.5h8V6" fill="none" stroke="#777" stroke-width="1.2"/><rect x="1.8" y="6" width="14.4" height="7" rx="3" fill="none" stroke="#777" stroke-width="1.2"/><rect x="5" y="10.5" width="8" height="5.5" fill="#fff" fill-opacity=".7" stroke="#777" stroke-width="1.2"/></svg></span></td></tr>
<tr class=""><td class="c"><span class="cb"></span></td><td class="c n">18</td><td>BJ250826001</td><td class="c" style="padding-left:7px">2025-08-26</td><td>深圳市汇信美地科技有限公司</td><td>汇信美地</td><td>FOB</td><td>USD</td><td>HX01</td><td>HX01</td><td class="ops"><span class="op" style="left:19px"><svg width="18" height="18" viewBox="0 0 18 18" ><path d="M4 12.5L11.5 3.2a1.6 1.6 0 0 1 2.4 2L6.6 14.3 3.4 15.4z" fill="none" stroke="#666" stroke-width="1.3" stroke-linejoin="round"/><path d="M9 16h7" stroke="#666" stroke-width="1.3"/></svg></span><span class="op" style="left:66px"><svg width="18" height="18" viewBox="0 0 18 18" ><path d="M2.5 4.5h13M6.5 4.5V2.6h5v1.9M4 4.5v10.3a1 1 0 0 0 1 1h8a1 1 0 0 0 1-1V4.5" fill="none" stroke="#777" stroke-width="1.3"/><path d="M9 7.5v5" stroke="#777" stroke-width="1.6"/></svg></span><span class="op" style="left:113px;margin-top:1px"><svg width="18" height="16.2" viewBox="0 0 20 18" ><path d="M1.2 9C3.2 5.4 6.4 3.8 10 3.8s6.8 1.6 8.8 5.2C16.8 12.6 13.6 14.2 10 14.2S3.2 12.6 1.2 9z" fill="none" stroke="#6c6c6c" stroke-width="1.4"/><circle cx="10" cy="9" r="3" fill="none" stroke="#6c6c6c" stroke-width="1.4"/></svg></span><span class="op" style="left:161px"><svg width="18" height="18" viewBox="0 0 18 18" ><path d="M5 6V2.5h8V6" fill="none" stroke="#777" stroke-width="1.2"/><rect x="1.8" y="6" width="14.4" height="7" rx="3" fill="none" stroke="#777" stroke-width="1.2"/><rect x="5" y="10.5" width="8" height="5.5" fill="#fff" fill-opacity=".7" stroke="#777" stroke-width="1.2"/></svg></span></td></tr>
</tbody></table></div>
<div class="abs" style="left:1906px;top:209px;width:5px;height:543px;border-radius:3px;background:#e0e1e5"></div>

<div id="pg">
<span style="left:214px">共 125 条</span>
<span style="left:289px;width:100px;height:27.5px;border:1px solid #dcdfe6;border-radius:3px;"></span><span style="left:306px">20条/页</span>
<svg class="abs" style="left:371px;top:9px" width="10" height="10" viewBox="0 0 10 10"><path d="M1.5 3l3.5 3.5L8.5 3" fill="none" stroke="#c0c4cc" stroke-width="1.2"/></svg>
<svg class="abs" style="left:411px;top:8px" width="12" height="12" viewBox="0 0 12 12"><path d="M8 1.5L3.5 6 8 10.5" fill="none" stroke="#c0c4cc" stroke-width="1.5"/></svg>
<span class="pn" style="left:442px;color:#0b3d91">1</span>
<span class="pn" style="left:477.5px">2</span>
<span class="pn" style="left:513px">3</span>
<span class="pn" style="left:548.5px">4</span>
<span class="pn" style="left:584px">5</span>
<span class="pn" style="left:619.5px">6</span>
<span class="pn" style="left:655px">7</span>
<svg class="abs" style="left:703px;top:8px" width="12" height="12" viewBox="0 0 12 12"><path d="M4 1.5L8.5 6 4 10.5" fill="none" stroke="#606266" stroke-width="1.5"/></svg>
<span style="left:748px">前往</span>
<span style="left:781px;width:45px;height:27.5px;border:1px solid #dcdfe6;border-radius:3px;text-align:center;line-height:26px">1</span>
<span style="left:829px;width:16px;text-align:center">页</span>
</div>

<div class="fl" style="top:616px"><svg class="abs" style="left:10px;top:6px" width="22" height="22" viewBox="0 0 20 20"><rect x="1.5" y="2" width="17" height="16" rx="1" fill="none" stroke="#fff" stroke-width="1.8"/><path d="M3 15l4.5-5 3.5 3.5 2.5-2.5 4 4" fill="none" stroke="#fff" stroke-width="1.6"/><circle cx="13.5" cy="6.5" r="1.5" fill="#fff"/></svg></div>
<div class="fl" style="top:686px"><svg class="abs" style="left:10px;top:6px" width="21" height="21" viewBox="0 0 22 22"><path d="M8 1.5h6v3H8zM5 5h12v5l2 1-2.5 6h-11L3 11l2-1z" fill="#fff"/><path d="M2 19.5c1.5-1.5 3-1.5 4.5 0s3 1.5 4.5 0 3-1.5 4.5 0 3 1.5 4.5 0" fill="none" stroke="#fff" stroke-width="1.8"/></svg></div>
<div class="fl" style="top:756px"><span class="abs" style="left:10px;top:3px;color:#fff;font-weight:700;font-size:24px;line-height:28px;letter-spacing:.5px;font-family:'Liberation Sans',sans-serif;transform:scaleX(.78);transform-origin:0 0">Ai</span></div>
</div>
</body></html>
